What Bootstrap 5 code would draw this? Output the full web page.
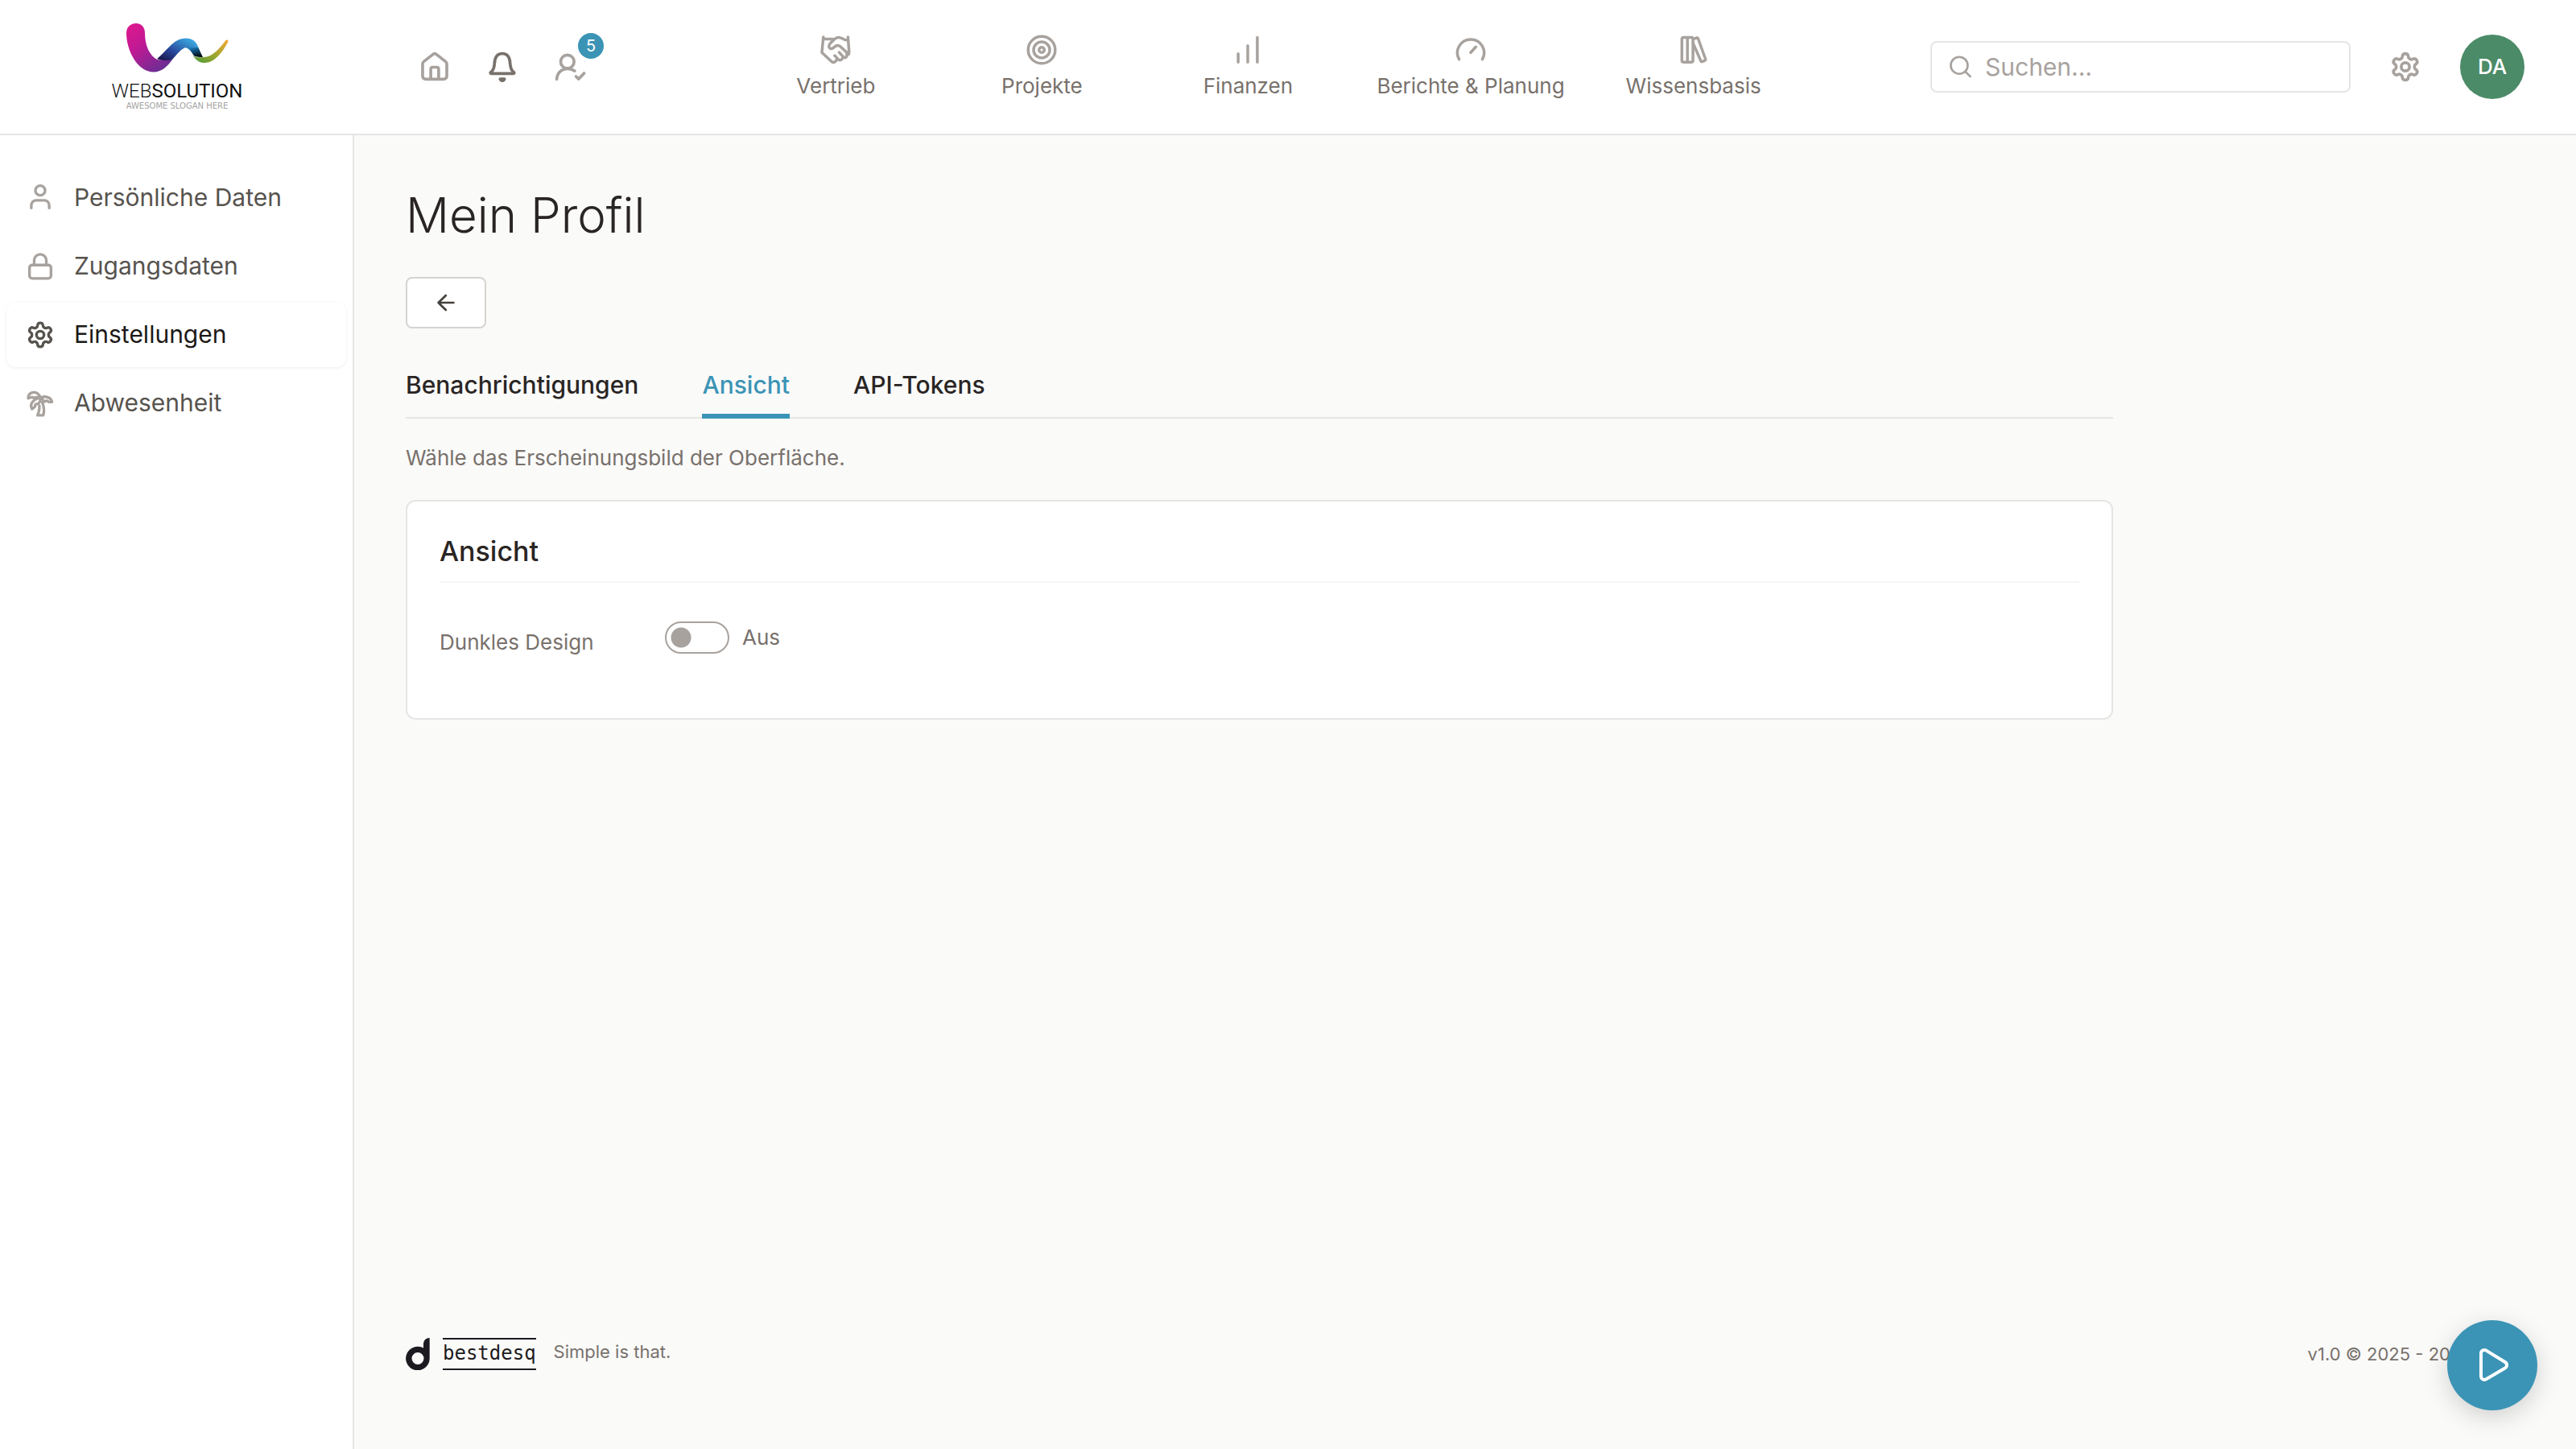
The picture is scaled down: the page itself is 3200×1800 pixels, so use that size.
<!DOCTYPE html>
<html lang="de">
<head>
<meta charset="utf-8">
<meta name="viewport" content="width=device-width, initial-scale=1">
<title>Mein Profil</title>
<link href="https://cdn.jsdelivr.net/npm/bootstrap@5.3.0/dist/css/bootstrap.min.css" rel="stylesheet">
<style>
  :root { --ink:#292524; --muted:#78716c; --soft:#a8a29e; --line:#e7e5e4; --brand:#3b94b5; --page:#fafaf9; }
  body { font-family: Inter, "Liberation Sans", sans-serif; font-size:26px; line-height:32px; color:var(--muted); background:var(--page); }
  a { color:inherit; text-decoration:none; }
  svg { flex:none; display:block; }
  .ico { fill:none; stroke:currentColor; stroke-width:1.5; stroke-linecap:round; stroke-linejoin:round; width:44px; height:44px; }
  .ico-42 { width:42px; height:42px; }
  .ico-40 { width:40px; height:40px; }
  .ico-32 { width:32px; height:32px; }
  .ico-48 { width:48px; height:48px; }
  .side-w { flex:0 0 440px; width:440px; }

  .topbar { height:168px; border-bottom:2px solid var(--line); padding-right:64px; }
  .brand-mark { width:200px; height:64px; }
  .brand-name { font:300 24px/26px Roboto, sans-serif; color:#111; }
  .brand-slogan { font:10px/12px "DejaVu Sans", sans-serif; color:#a3a3a3; }
  .quick { padding-left:64px; gap:12px; color:var(--soft); }
  .quick a, .gear-link { width:72px; height:72px; position:relative; }
  .quick a.unread { color:var(--muted); }
  .count-badge { position:absolute; left:46px; top:-6px; width:32px; height:32px; font-size:20px; line-height:32px; background:var(--brand); }
  .main-nav a { min-width:256px; padding:0 32px 2px; gap:8px; }
  .main-nav svg, .gear-link { color:var(--soft); }
  .tools { gap:32px; }
  .search-box { width:522px; height:64px; border:2px solid var(--line); border-radius:8px; padding:0 20px; gap:14px; color:var(--soft); }
  .search-box .form-control { font-size:30px; line-height:36px; color:var(--ink); }
  .search-box .form-control::placeholder { color:var(--soft); }
  .avatar { width:80px; height:80px; background:#4b8b68; font-weight:500; }

  .sidebar { border-right:2px solid var(--line); padding:38px 8px; gap:5px; font-size:30px; line-height:36px; color:#57534e; }
  .sidebar a { height:80px; padding:0 22px; gap:22px; border-radius:12px; }
  .sidebar svg { color:var(--soft); }
  .sidebar span { padding-bottom:2px; }
  .sidebar a.current { color:#1c1917; box-shadow:0 1px 4px rgba(0,0,0,.07); }
  .sidebar a.current svg { color:#57534e; }

  .content { padding:63px 64px 98px; }
  .inner { max-width:2121px; }
  h1 { font-size:60px; line-height:72px; font-weight:300; color:var(--ink); margin-bottom:41px; }
  .back-btn { width:100px; height:64px; border:2px solid #d6d3d1; border-radius:8px; color:#44403c; }
  .tab-row { margin-top:52px; gap:79px; font-size:30px; line-height:36px; font-weight:500; color:var(--ink); box-shadow:inset 0 -2px var(--line); }
  .tab-row a { padding-bottom:18px; border-bottom:6px solid transparent; }
  .tab-row a.current { color:var(--brand); border-color:var(--brand); }
  .intro { margin:33px 0 36px; }
  .panel { border:2px solid var(--line); border-radius:12px; padding:42px 40px 78px; }
  h2 { font-size:34px; line-height:40px; font-weight:500; color:var(--ink); padding-bottom:17px; border-bottom:2px solid #f5f5f4; margin-bottom:48px; }
  .field-label { width:280px; padding-top:10px; }
  .toggle-row { gap:16px; height:40px; }
  .toggle-row .form-check-input { width:80px; height:40px; margin:0; border:2px solid var(--soft); border-radius:20px; background:#fff radial-gradient(circle at 18px 18px, var(--soft) 12px, transparent 13px); }
  .foot { font-size:22px; line-height:28px; padding-right:65px; }
  .wordmark { height:40px; border-top:2px solid #1c1a20; border-bottom:2px solid #1c1a20; margin:0 22px 0 16px; font:24px/34px "DejaVu Sans Mono", monospace; color:#1c1a20; }
  .claim { padding-bottom:6px; }
  .fab { position:fixed; right:48px; bottom:48px; width:112px; height:112px; background:var(--brand); box-shadow:0 8px 30px rgba(0,0,0,.17); }
</style>
<script src="https://cdn.jsdelivr.net/npm/bootstrap@5.3.0/dist/js/bootstrap.bundle.min.js"></script>
</head>
<body class="min-vh-100 d-flex flex-column">

<svg width="0" height="0" class="position-absolute" aria-hidden="true">
  <defs>
    <path id="cog-tooth" d="M-2.2-4.1C-1.3-4.6-1.6-5.1-1.5-5.4-1.4-6.2-.8-6.7 0-6.7S1.4-6.2 1.5-5.4C1.6-5.1 1.3-4.6 2.2-4.1"/>
    <symbol id="cog" viewBox="0 0 18 18"><g transform="translate(9 9)">
      <use href="#cog-tooth"/><use href="#cog-tooth" transform="rotate(60)"/><use href="#cog-tooth" transform="rotate(120)"/><use href="#cog-tooth" transform="rotate(180)"/><use href="#cog-tooth" transform="rotate(240)"/><use href="#cog-tooth" transform="rotate(300)"/>
      <circle r="2.1"/></g></symbol>
    <linearGradient id="g-pink" x1="0" y1="0" x2="0.7" y2="1"><stop offset="0" stop-color="#e0188c"/><stop offset=".45" stop-color="#c01a94"/><stop offset="1" stop-color="#6b2d93"/></linearGradient>
    <linearGradient id="g-blue" x1="0" y1="1" x2="1" y2="0"><stop offset="0" stop-color="#1b0f40"/><stop offset=".4" stop-color="#27479a"/><stop offset=".85" stop-color="#3aa3dc"/></linearGradient>
    <linearGradient id="g-deep" x1="0" y1="0" x2=".5" y2="1"><stop offset="0" stop-color="#2f93cf"/><stop offset=".45" stop-color="#0f5585"/><stop offset="1" stop-color="#04121c"/></linearGradient>
    <linearGradient id="g-lime" x1="0" y1="1" x2="1" y2="0"><stop offset="0" stop-color="#4c9a3a"/><stop offset=".45" stop-color="#9aa62f"/><stop offset="1" stop-color="#f5a93a"/></linearGradient>
  </defs>
</svg>

<header class="topbar bg-white d-flex align-items-center">
  <a href="#" class="side-w d-flex flex-column align-items-center" aria-label="Websolution">
    <svg class="brand-mark" viewBox="20 18 160 64" preserveAspectRatio="xMidYMid meet" aria-hidden="true">
      <path fill="url(#g-pink)" d="M37 31C37 23 43 19 49 19s11 4 11 12c0 16 6 28 15 33 6 1 12 1 19 0-6 9-14 15.500-23 15.500C51 79.500 37 53 37 31z"/>
      <path fill="url(#g-blue)" d="M75 63C87 54 95 37.500 111 37.500c9 0 13 5 15.500 11.500h-16c-6 2-10 8-17 15.500-6 1-13 1-18.500-1.500z"/>
      <path fill="url(#g-deep)" d="M110 49h16.500c1.500 4 3.500 8 5.500 12-4 0-8-.5-11-1.500-3-5-5.500-9-11-10.500z"/>
      <path fill="url(#g-lime)" d="M120 59.500c4 2 7 2 12 1.500 12 0 20-10 28-20.500 2-2 4-.5 3.300 1.500C157 54 147 68 134 68c-6 0-10-2.500-14-8.500z"/>
    </svg>
    <div class="brand-name mt-2">WEB<b>SOLUTION</b></div>
    <div class="brand-slogan">AWESOME SLOGAN HERE</div>
  </a>

  <nav class="quick d-flex" aria-label="Schnellzugriff">
    <a href="#" class="d-flex align-items-center justify-content-center" aria-label="Startseite"><svg class="ico" viewBox="0 0 18 18"><path d="M2.850 7.600c0-.5.25-1 .65-1.300L8.200 2.600c.5-.4 1.100-.4 1.600 0l4.700 3.700c.4.3.65.8.65 1.300v6.100c0 .9-.7 1.600-1.600 1.600h-9.100c-.9 0-1.600-.7-1.600-1.600z"/><path d="M7 15.200V10.200c0-.6.4-1 1-1h2c.6 0 1 .4 1 1v5"/></svg></a>
    <a href="#" class="unread d-flex align-items-center justify-content-center" aria-label="Mitteilungen"><svg class="ico" viewBox="0 0 18 18"><path d="M14.800 12.400H3.200c-.3 0-.4-.4-.1-.6C4.300 10.900 4.900 9.700 5 7.500 5.100 4.700 6.100 2.250 9 2.250s3.900 2.450 4 5.250c.1 2.200.7 3.400 1.900 4.300.3.200.2.600-.1.600z"/><path d="M7.900 15.200c.5 1.100 1.700 1.100 2.200 0z"/></svg></a>
    <a href="#" class="d-flex align-items-center justify-content-center" aria-label="Anwesenheit"><svg class="ico" viewBox="0 0 18 18"><circle cx="7.700" cy="6.400" r="3.400"/><path d="M2.300 15.300C2.500 12 4.800 10 7.700 10c1.400 0 2.600.4 3.700 1.100M12.100 13.900l1.300 1.300 2.800-2.900"/></svg><span class="count-badge rounded-circle text-white text-center">5</span></a>
  </nav>

  <nav class="main-nav d-flex mx-auto" aria-label="Hauptmenü">
    <a href="#" class="d-flex flex-column align-items-center"><svg class="ico ico-42" viewBox="0 0 18 18"><path d="M2.500 2.100l-.8 8.300 5.300 4.900c.7.6 1.500.4 2-.3l.6-.6M2.500 3.200h5.300M15.600 2.100l.6 8.300-1.200.8M15.500 3.600c-1.200.5-2.100-.2-3-.7-1.500-.8-3-.7-4.200.5L6 5.700c-.8.9-.7 2 .1 2.500.9.500 1.500 0 2.200-.7.900-.9 2.200-1.200 3.200-.3l4.500 4.100M10.900 10.300l2.300 2.500c.9.8 2.100-.1 1.700-1.200M8.500 12l2 2.100c1 .8 2.200 0 2.200-1"/></svg>Vertrieb</a>
    <a href="#" class="d-flex flex-column align-items-center"><svg class="ico ico-42" viewBox="0 0 18 18"><circle cx="9" cy="9" r="7.200"/><circle cx="9" cy="9" r="4.300"/><circle cx="9" cy="9" r="1.400"/></svg>Projekte</a>
    <a href="#" class="d-flex flex-column align-items-center"><svg class="ico ico-42" viewBox="0 0 18 18"><path d="M3.900 11v4.500M9 6.700v8.800M14.100 2.400v13.100"/></svg>Finanzen</a>
    <a href="#" class="d-flex flex-column align-items-center"><svg class="ico ico-42" viewBox="0 0 18 18"><path d="M2.800 14A7.100 7.100 0 1 1 15.200 14M9 10.400l2.700-3"/></svg>Berichte &amp; Planung</a>
    <a href="#" class="d-flex flex-column align-items-center"><svg class="ico ico-42" viewBox="0 0 18 18"><rect x="2.700" y="2.400" width="5.900" height="13.100" rx=".9"/><path d="M5.650 2.400v13.100M8.700 3.300l1.700-.7c.4-.2.800 0 1 .5l3.800 10.600c.2.500 0 .8-.4 1l-1.100.5c-.5.200-.8 0-1-.5L8.700 5.500"/></svg>Wissensbasis</a>
  </nav>

  <div class="tools d-flex align-items-center">
    <label class="search-box d-flex align-items-center">
      <svg class="ico ico-32" viewBox="0 0 18 18" aria-hidden="true"><circle cx="7.800" cy="8" r="5.900"/><path d="M12.100 12.400l3.400 3.400"/></svg>
      <input type="search" class="form-control border-0 bg-transparent shadow-none p-0" placeholder="Suchen..." aria-label="Suchen">
    </label>
    <a href="#" class="gear-link d-flex align-items-center justify-content-center" aria-label="Einstellungen"><svg class="ico"><use href="#cog"/></svg></a>
    <a href="#" class="avatar rounded-circle text-white d-flex align-items-center justify-content-center">DA</a>
  </div>
</header>

<div class="d-flex flex-grow-1">
  <nav class="sidebar side-w bg-white d-flex flex-column" aria-label="Profil">
    <a href="#" class="d-flex align-items-center"><svg class="ico ico-40" viewBox="0 0 18 18"><circle cx="9" cy="4.800" r="2.700"/><path d="M4 14.600v-1.600c0-1.500 1.200-2.700 2.700-2.700h4.600c1.500 0 2.700 1.200 2.700 2.700v1.600"/></svg><span>Persönliche Daten</span></a>
    <a href="#" class="d-flex align-items-center"><svg class="ico ico-40" viewBox="0 0 18 18"><rect x="3" y="8.200" width="12" height="7.500" rx="1.500"/><path d="M5.600 8.200V5.600a3.400 3.400 0 0 1 6.800 0v2.600"/></svg><span>Zugangsdaten</span></a>
    <a href="#" class="current d-flex align-items-center" aria-current="page"><svg class="ico ico-40"><use href="#cog"/></svg><span>Einstellungen</span></a>
    <a href="#" class="d-flex align-items-center"><svg class="ico ico-40" viewBox="0 0 18 18"><path d="M9.200 6C8.300 3.600 6.400 2.400 4.500 3 3 3.500 2.200 4.700 2.300 6.200l2.100-.7 1.100.6C6.800 5.500 8 5.500 9.200 6c1.900-1.400 5.900-.6 6.400 2.200l-1.700.1-1.300-.8-1.400.6C10.900 7.300 10.200 6.500 9.200 6zM9.200 6C6 6.200 2.600 8.900 4.400 12.200l1.600-1.300.3-1.300 1.700-.4C8.800 8.400 9.200 7.300 9.200 6zM10.100 8.400c1 2.300 1.200 4.900.6 7.300H7.500c.8-1.900 1.100-3.700 1-5.400"/></svg><span>Abwesenheit</span></a>
  </nav>

  <main class="content d-flex flex-column flex-grow-1">
    <div class="inner w-100">
      <h1>Mein Profil</h1>
      <button type="button" class="back-btn bg-white d-flex align-items-center justify-content-center" aria-label="Zurück"><svg class="ico ico-32" viewBox="0 0 18 18"><path d="M14.300 9H3.700M8.900 3.900L3.700 9l5.200 5.100"/></svg></button>
      <nav class="tab-row d-flex" aria-label="Einstellungen">
        <a href="#">Benachrichtigungen</a>
        <a href="#" class="current" aria-current="true">Ansicht</a>
        <a href="#">API-Tokens</a>
      </nav>
      <p class="intro">Wähle das Erscheinungsbild der Oberfläche.</p>
      <section class="panel bg-white">
        <h2>Ansicht</h2>
        <div class="d-flex">
          <label class="field-label" for="dark">Dunkles Design</label>
          <div class="toggle-row d-flex align-items-center">
            <input class="form-check-input" type="checkbox" role="switch" id="dark">
            <span>Aus</span>
          </div>
        </div>
      </section>
    </div>

    <footer class="foot d-flex align-items-center mt-auto">
      <svg width="30" height="40" viewBox="0 0 30 40" aria-hidden="true"><path fill="#1c1a20" fill-rule="evenodd" d="M22 12.500V8c0-5 3-8 7.700-8v25.500A14.800 14.800 0 1 1 22 12.500zM15 18a7.500 7.500 0 1 0 0 15 7.500 7.500 0 0 0 0-15z"/></svg>
      <span class="wordmark">bestdesq</span>
      <span class="claim">Simple is that.</span>
      <span class="ms-auto">v1.0 © 2025 - 2026</span>
    </footer>
  </main>
</div>

<button type="button" class="fab rounded-circle border-0 text-white d-flex align-items-center justify-content-center" aria-label="Zeiterfassung starten"><svg class="ico ico-48" viewBox="0 0 18 18"><path d="M3.750 3.500c0-1.300 1.300-2 2.400-1.400l8.800 5.400c1.100.7 1.100 2.100 0 2.800L6.150 15.500c-1.100.6-2.400-.1-2.400-1.400z"/></svg></button>
</body>
</html>
